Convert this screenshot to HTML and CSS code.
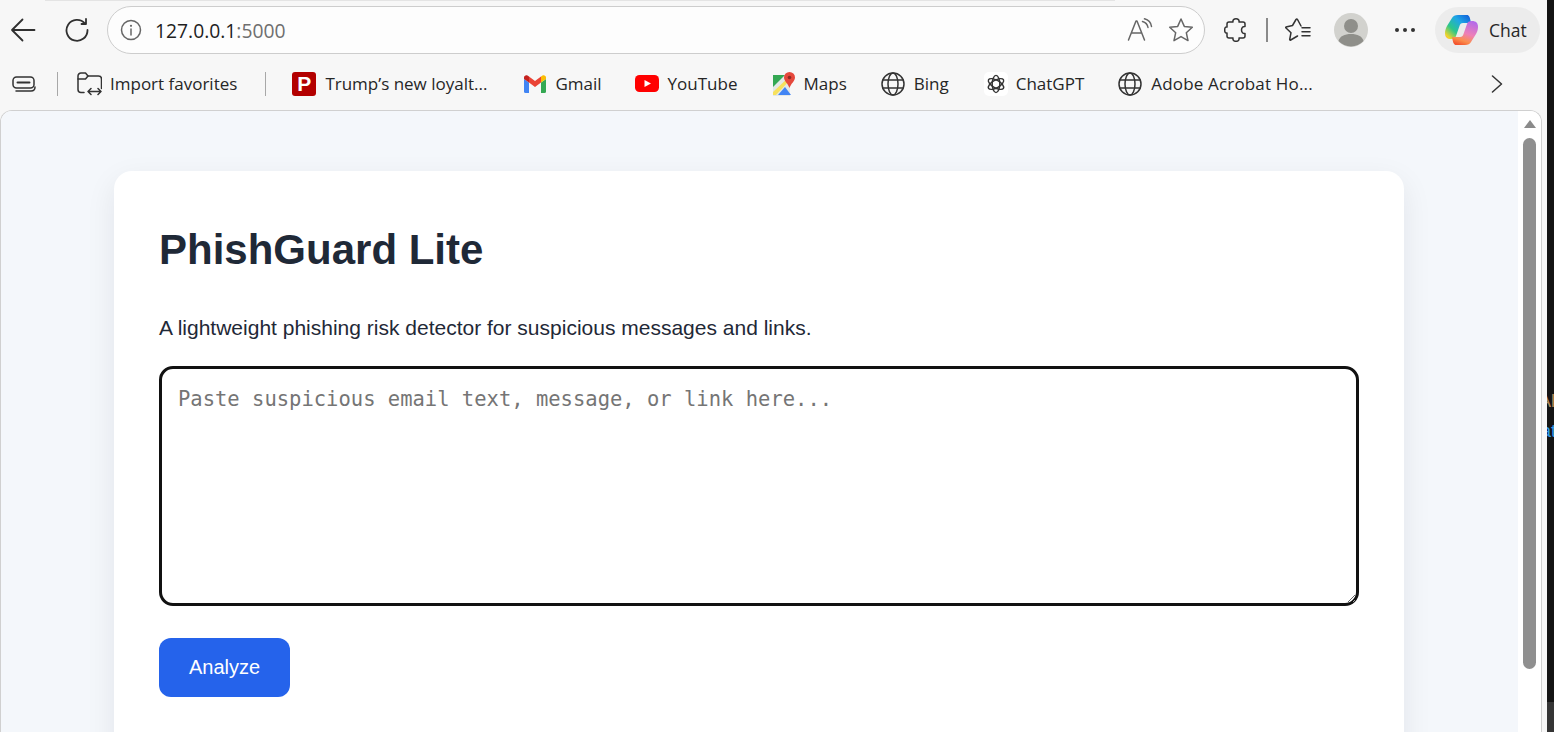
FILE: index.html
```html
<!DOCTYPE html>
<html lang="en">
<head>
<meta charset="utf-8">
<title>PhishGuard Lite</title>
<link rel="stylesheet" href="styles.css">
</head>
<body>
<div class="screen">
  <div class="window">
    <div class="tabline"></div>
    <div class="toolbar">
      <button class="tool back" aria-label="Back">
        <svg width="26" height="24" viewBox="0 0 26 24"><path d="M24.500 12H2M12.500 1.500 2 12l10.500 10.500" class="ln"/></svg>
      </button>
      <button class="tool reload" aria-label="Reload">
        <svg width="24" height="24" viewBox="0 0 24 24"><path d="M22.500 12A10.500 10.500 0 1 1 20 5.500M21 1v5h-4.500" class="ln"/></svg>
      </button>
      <div class="address">
        <svg class="info" width="22" height="22" viewBox="0 0 22 22"><circle cx="11" cy="11" r="9.500" class="gy"/><path d="M11 10v6" class="gy"/><circle cx="11" cy="6.800" r="1.100" fill="#666"/></svg>
        <div class="url">127.0.0.1<span class="port">:5000</span></div>
        <svg class="read" width="26" height="24" viewBox="0 0 26 24"><path d="M1.500 22 9 3h1l7.500 19M4.500 15h10" class="gy"/><path d="M15.500 3.500c3 .8 5 3 5.500 6M17.500.8c3.500.9 6.500 4 7 7.700" class="gy"/></svg>
        <svg class="star" width="26" height="26" viewBox="0 0 26 26"><path d="m13 2 3.300 7.400 8 .9-6 5.400 1.700 7.900-7-4-7 4 1.700-7.900-6-5.400 8-.9z" class="gy"/></svg>
      </div>
      <svg class="puzzle" width="24" height="24" viewBox="0 0 24 24"><path d="M9 4C8.500 2 10 .8 12 .8S15.500 2 15 4H19Q21 4 21 6V8.500C19 8 17.500 10 17.500 12S19 16 21 15.500V18Q21 20 19 20H15C15.500 22 14 23.300 12 23.300S8.500 22 9 20H5Q3 20 3 18V15C1 15.500 .7 13.500 .7 12S1 8.500 3 9V6Q3 4 5 4Z" class="dk"/></svg>
      <span class="vsep"></span>
      <svg class="favs" width="26" height="24" viewBox="0 0 26 24"><path d="M16 8 12.500 1.500Q11.700.5 11 1.500L7.500 7.500 1 9Q.3 9.500 1 10L6 14.700 4.700 21.500Q4.800 22.500 5.700 22L12.500 18" class="dk"/><path d="M17 9.700h8M17 13.700h8M17 17.700h8" class="dk"/></svg>
      <div class="avatar"><svg width="34" height="34" viewBox="0 0 34 34"><circle cx="17" cy="17" r="17" fill="#d2d2ce"/><circle cx="17" cy="13" r="7" fill="#8f8f8a"/><path d="M4.500 28c1.500-5 6-7 12.500-7s11 2 12.500 7a17 17 0 0 1-25 0Z" fill="#8f8f8a"/></svg></div>
      <div class="dots"><i></i><i></i><i></i></div>
      <div class="chat">
        <svg width="34" height="30" viewBox="0 0 34 30">
          <defs>
            <linearGradient id="cpa" x1="1" y1="0" x2="0" y2="1"><stop offset="0" stop-color="#0f55d8"/><stop offset=".35" stop-color="#1fa6e6"/><stop offset=".65" stop-color="#2cc78a"/><stop offset=".9" stop-color="#f2d42a"/><stop offset="1" stop-color="#f59a3c"/></linearGradient>
            <linearGradient id="cpb" x1=".7" y1="0" x2=".3" y2="1"><stop offset="0" stop-color="#b56be8"/><stop offset=".5" stop-color="#ee7fb8"/><stop offset=".8" stop-color="#fb8f4c"/><stop offset="1" stop-color="#f4552f"/></linearGradient>
          </defs>
          <path d="M7 3C8 1 10 0 13 0H22C24 0 25 2 26 8H18C16 8 15 9 14.500 11L11 21C10.500 23 9 24 6 24 2 24 0 22 0 18 0 15 1 13 2 11Z" fill="url(#cpa)"/>
          <path d="M26 27C25 29 23 30 20 30H11C9 30 8 28 7 22H15C17 22 18 21 18.500 19L22 9C22.500 7 24 6 27 6 31 6 33 8 33 12 33 15 32 17 31 19Z" fill="url(#cpb)"/>
        </svg>
        <span>Chat</span>
      </div>
    </div>

    <div class="bookmarks">
      <svg class="tabs" width="24" height="18" viewBox="0 0 24 18"><rect x="1" y="2" width="21" height="11" rx="3.500" class="dk"/><path d="M5.500 7.500h12" class="dk2"/><path d="M4 16h15c2.500 0 4-1.500 4-4" class="dk"/></svg>
      <span class="bsep first"></span>
      <div class="bm import">
        <svg width="25" height="24" viewBox="0 0 25 24"><path d="M7 20.500H4a3 3 0 0 1-3-3V4a3 3 0 0 1 3-3h4.500l2.500 3h10.500a3 3 0 0 1 3 3v9.500" class="dk"/><path d="M1 7h7.500L11 4" class="dk"/><path d="M11 19.500h13M14 16.500l-3 3 3 3M21 16.500l3 3-3 3" class="dk"/></svg>
        <span>Import favorites</span>
      </div>
      <span class="bsep second"></span>
      <div class="bm trump">
        <div class="ppic">P</div>
        <span>Trump’s new loyalt...</span>
      </div>
      <div class="bm gmail">
        <svg width="22" height="18" viewBox="0 0 22 18"><path d="M1.500 18A1.500 1.500 0 0 1 0 16.500V4l5 3.500V18Z" fill="#4285f4"/><path d="M17 18V7.500L22 4v12.500a1.500 1.500 0 0 1-1.500 1.500Z" fill="#34a853"/><path d="M5 7.500 11 12l6-4.500V1.500L11 6 5 1.500Z" fill="#ea4335"/><path d="M0 4V2.500C0 .6 2.200-.4 3.500.6L5 1.500v6Z" fill="#c5221f"/><path d="M17 1.500 18.500.6C19.800-.4 22 .6 22 2.500V4l-5 3.500Z" fill="#fbbc04"/></svg>
        <span>Gmail</span>
      </div>
      <div class="bm yt">
        <svg width="24" height="17" viewBox="0 0 24 17"><rect width="24" height="17" rx="4.500" fill="#f00"/><path d="m9.500 5 6.500 3.500-6.500 3.500Z" fill="#fff"/></svg>
        <span>YouTube</span>
      </div>
      <div class="bm maps">
        <svg width="23" height="24" viewBox="0 0 23 24"><path d="M0 3h17v21H0Z" fill="#e4e8e6"/><path d="M0 3h12L0 15Z" fill="#34a853"/><path d="M0 20 17 4v4L3 23H0Z" fill="#f7e15d"/><path d="M5 23 12 15l6 8Z" fill="#4285f4"/><path d="M16.500 0a5.500 5.500 0 0 1 5.500 5.500c0 3.500-4 6-5.500 10.500C15 11.500 11 9 11 5.500A5.500 5.500 0 0 1 16.500 0Z" fill="#e5483c"/><circle cx="16.500" cy="5.500" r="1.800" fill="#8f2a22"/></svg>
        <span>Maps</span>
      </div>
      <div class="bm bing">
        <svg width="24" height="24" viewBox="0 0 24 24"><circle cx="12" cy="12" r="11" class="dk"/><ellipse cx="12" cy="12" rx="5" ry="11" class="dk"/><path d="M2 8h20M2 16h20" class="dk"/></svg>
        <span>Bing</span>
      </div>
      <div class="bm gpt">
        <div class="gptbox"><svg width="20" height="20" viewBox="0 0 20 20"><g class="dk3"><ellipse cx="10" cy="10" rx="3.800" ry="8.600"/><ellipse cx="10" cy="10" rx="3.800" ry="8.600" transform="rotate(60 10 10)"/><ellipse cx="10" cy="10" rx="3.800" ry="8.600" transform="rotate(120 10 10)"/></g></svg></div>
        <span>ChatGPT</span>
      </div>
      <div class="bm adobe">
        <svg width="24" height="24" viewBox="0 0 24 24"><circle cx="12" cy="12" r="11" class="dk"/><ellipse cx="12" cy="12" rx="5" ry="11" class="dk"/><path d="M2 8h20M2 16h20" class="dk"/></svg>
        <span>Adobe Acrobat Ho...</span>
      </div>
      <svg class="more" width="12" height="18" viewBox="0 0 12 18"><path d="m1.500 1 9 8-9 8" class="dk"/></svg>
    </div>

    <div class="viewport">
      <main class="page">
        <section class="card">
          <h1>PhishGuard Lite</h1>
          <p>A lightweight phishing risk detector for suspicious messages and links.</p>
          <textarea placeholder="Paste suspicious email text, message, or link here..."></textarea>
          <button class="analyze">Analyze</button>
        </section>
      </main>
      <div class="scrollbar">
        <svg width="12" height="8" viewBox="0 0 12 8"><path d="M6 0 12 8H0Z" fill="#8a8a8a"/></svg>
        <div class="thumb"></div>
      </div>
    </div>
  </div>
  <div class="desk">
    <div class="d1">Al</div>
    <div class="d2">at</div>
    <div class="dbar"></div>
  </div>
</div>
</body>
</html>
```
FILE: styles.css
```css
* { box-sizing: border-box; }
html, body { margin: 0; height: 100%; overflow: hidden; }
body { font-family: "Open Sans", "Noto Sans", sans-serif; color: #262626; }

.screen { display: flex; width: 1554px; height: 732px; overflow: hidden; }
.window { width: 1547px; height: 732px; background: #f7f7f7; display: flex; flex-direction: column; padding-right: 5px; flex: none; }
.desk { flex: 1; background: #141414; overflow: hidden; padding-top: 391px; font: 18px/20px "Liberation Sans", sans-serif; display: flex; flex-direction: column; }
.d1 { color: #b08a5a; margin-left: -8px; white-space: nowrap; }
.d2 { color: #2f9bea; margin-left: -6px; margin-top: 10px; white-space: nowrap; }
.dbar { margin-top: auto; height: 30px; background: #353535; }

.ln, .gy, .dk, .dk2, .dk3 { fill: none; stroke-linecap: round; stroke-linejoin: round; }
.ln { stroke: #303030; stroke-width: 1.800; }
.gy { stroke: #666; stroke-width: 1.500; }
.dk { stroke: #333; stroke-width: 1.500; }
.dk2 { stroke: #333; stroke-width: 2; }
.dk3 { stroke: #333; stroke-width: 1.400; }

.tabline { height: 1px; flex: none; margin-left: 45px; width: 1070px; background: #e4e4e4; }
.toolbar { height: 54px; display: flex; align-items: center; flex: none; padding-top: 4px; }
.toolbar > * { flex: none; }
.tool { border: 0; background: none; padding: 0; display: flex; }
.back { margin-left: 10px; }
.reload { margin-left: 29px; }
.address { width: 1098px; height: 48px; margin-left: 18px; border: 1.500px solid #cdcdcd; border-radius: 24px; background: #fdfdfd; display: flex; align-items: center; padding-left: 12px; }
.url { font-size: 19.300px; margin-left: 13px; color: #1f1f1f; flex: 1; }
.port { color: #6f6f6f; }
.read { margin-right: 15px; }
.star { margin-right: 10px; }
.puzzle { margin-left: 19px; }
.vsep { width: 2px; height: 24px; background: #8a8a8a; margin-left: 18px; }
.favs { margin-left: 17px; }
.avatar { margin-left: 23px; display: flex; }
.dots { margin-left: 27px; display: flex; gap: 4px; }
.dots i { width: 4px; height: 4px; border-radius: 50%; background: #333; }
.chat { margin-left: 20px; width: 105px; height: 46px; background: #ececec; border-radius: 23px; display: flex; align-items: center; padding-left: 10px; gap: 10px; font-size: 17.500px; }

.bookmarks { height: 55px; display: flex; align-items: center; flex: none; font-size: 17px; padding-top: 2px; }
.bookmarks > * { flex: none; }
.bm { display: flex; align-items: center; gap: 9px; white-space: nowrap; }
.tabs { margin-left: 12px; }
.bsep { width: 1px; height: 24px; background: #a8a8a8; }
.bsep.first { margin-left: 21px; }
.import { margin-left: 19px; gap: 8px; }
.bsep.second { margin-left: 28px; }
.trump { margin-left: 26px; }
.ppic { width: 24px; height: 24px; border-radius: 3px; background: #b30000; color: #fff; font: bold 21px/24px "Liberation Sans", sans-serif; text-align: center; }
.gmail { margin-left: 37px; }
.yt { margin-left: 33px; }
.maps { margin-left: 35px; gap: 8px; }
.bing { margin-left: 34px; }
.gpt { margin-left: 35px; gap: 8px; }
.gptbox { width: 24px; height: 24px; background: #fff; border-radius: 5px; display: flex; align-items: center; justify-content: center; }
.adobe { margin-left: 34px; letter-spacing: .17px; }
.more { margin-left: auto; margin-right: 39px; }

.viewport { flex: 1; min-height: 0; display: flex; border: 1px solid #d0d0d0; border-bottom: 0; border-radius: 12px 12px 0 0; overflow: hidden; background: #fff; }
.page { flex: 1; background: #f4f7fb; padding: 60px 1px 0 0; overflow: hidden; }
.card { width: 1290px; height: 900px; margin: 0 auto; background: #fff; border-radius: 18px; padding: 45px; box-shadow: 0 10px 30px rgba(15, 23, 42, .08); font-family: "Liberation Sans", Arial, sans-serif; }
h1 { margin: 9px 0 0; font-size: 42px; line-height: 50px; font-weight: 700; color: #1f2937; }
.card p { margin: 38px 0 0; font-size: 21px; line-height: 30px; color: #1f2937; }
textarea { display: block; width: 1200px; height: 240px; margin-top: 23px; border: 3px solid #111; border-radius: 14px; padding: 15px 16px; font: 20.500px/30px "DejaVu Sans Mono", monospace; outline: none; background: #fff; }
textarea::placeholder { color: #757575; }
.analyze { display: block; width: 131px; height: 59px; margin-top: 32px; border: 0; border-radius: 12px; background: #2563eb; color: #fff; font: 20px "Liberation Sans", Arial, sans-serif; }

.scrollbar { width: 23px; flex: none; background: #fff; display: flex; flex-direction: column; align-items: center; padding-top: 9px; }
.thumb { width: 13px; height: 531px; margin-top: 10px; border-radius: 7px; background: #8f8f8f; }
```
